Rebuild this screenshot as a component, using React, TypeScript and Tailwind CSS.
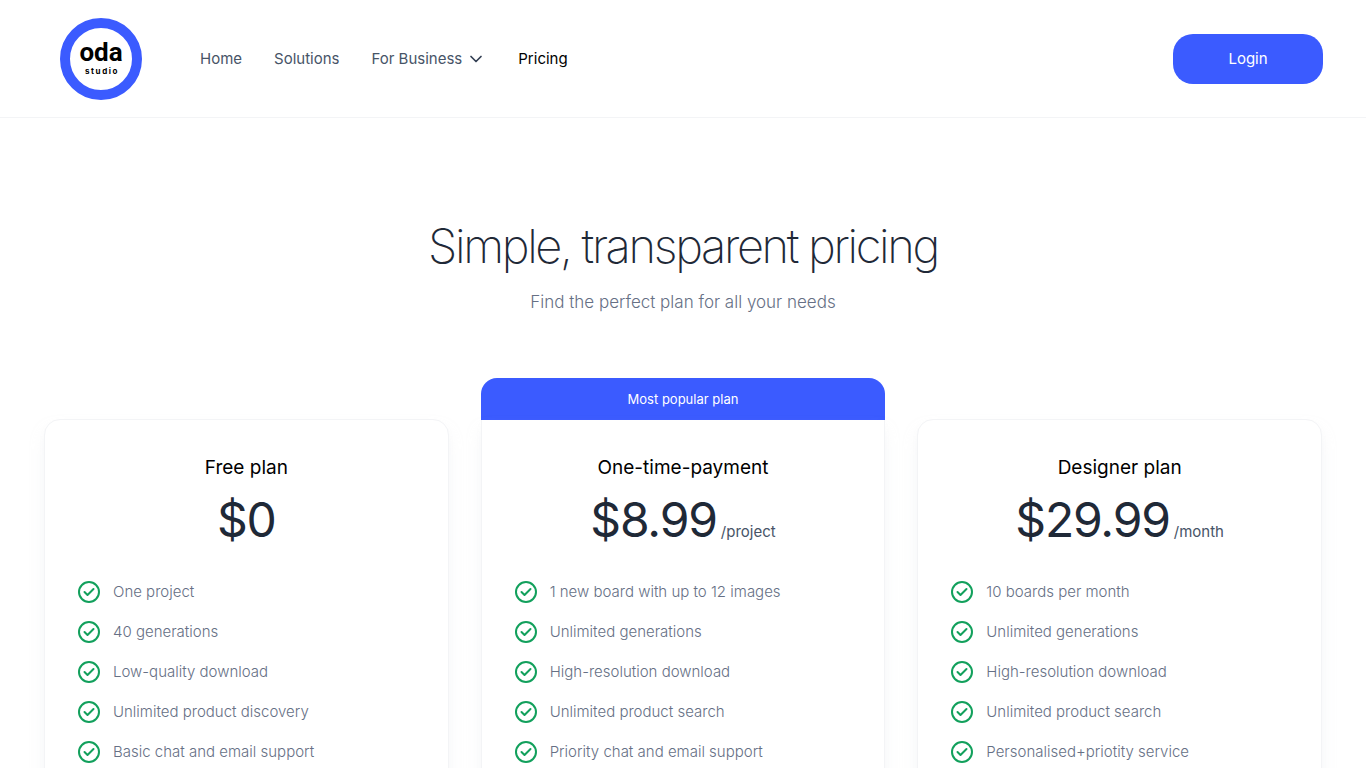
import clsx from 'clsx'

interface Plan {
  name: string
  price: string
  period?: string
  popular?: boolean
  features: string[]
}

const plans: Plan[] = [
  {
    name: 'Free plan',
    price: '$0',
    features: [
      'One project',
      '40 generations',
      'Low-quality download',
      'Unlimited product discovery',
      'Basic chat and email support',
    ],
  },
  {
    name: 'One-time-payment',
    price: '$8.99',
    period: '/project',
    popular: true,
    features: [
      '1 new board with up to 12 images',
      'Unlimited generations',
      'High-resolution download',
      'Unlimited product search',
      'Priority chat and email support',
    ],
  },
  {
    name: 'Designer plan',
    price: '$29.99',
    period: '/month',
    features: [
      '10 boards per month',
      'Unlimited generations',
      'High-resolution download',
      'Unlimited product search',
      'Personalised+priotity service',
    ],
  },
]

function Logo() {
  return (
    <a href="#" aria-label="oda studio" className="shrink-0">
      <svg width="82" height="82" viewBox="0 0 82 82">
        <circle cx="41" cy="41" r="36" fill="#fff" stroke="#3b5bff" strokeWidth="10" />
        <text x="41" y="43" textAnchor="middle" className="fill-black font-['Roboto',sans-serif] text-[26px] font-bold">
          oda
        </text>
        <text x="42" y="56" textAnchor="middle" className="fill-black font-['Inter',sans-serif] text-[8px] font-bold tracking-[0.2em]">
          studio
        </text>
      </svg>
    </a>
  )
}

function ChevronIcon() {
  return (
    <svg width="20" height="20" viewBox="0 0 20 20" fill="none" stroke="#344054" strokeWidth="1.7" strokeLinecap="round" strokeLinejoin="round">
      <path d="M5 7.5l5 5 5-5" />
    </svg>
  )
}

function CheckIcon() {
  return (
    <svg width="24" height="24" viewBox="0 0 24 24" fill="none" stroke="#12a05c" strokeWidth="2" strokeLinecap="round" strokeLinejoin="round" className="shrink-0">
      <circle cx="12" cy="12" r="10" />
      <path d="M7.5 12l3 3 6-6" />
    </svg>
  )
}

function Header() {
  return (
    <header className="flex items-center justify-between border-b border-gray-100 pt-[18px] pr-[43px] pb-[17px] pl-[60px]">
      <div className="flex items-center gap-[58px]">
        <Logo />
        <nav className="flex items-center gap-8 text-[15px] text-[#475467]">
          <a href="#">Home</a>
          <a href="#">Solutions</a>
          <button type="button" className="flex items-center gap-1">
            For Business
            <ChevronIcon />
          </button>
          <a href="#" className="text-black">Pricing</a>
        </nav>
      </div>
      <button type="button" className="h-[50px] w-[150px] rounded-[20px] bg-[#3b5bff] text-[15px] text-white">
        Login
      </button>
    </header>
  )
}

function PlanCard({ plan }: { plan: Plan }) {
  return (
    <div>
      {plan.popular && (
        <div className="flex h-[42px] items-center justify-center rounded-t-2xl bg-[#3b5bff] pt-0.5 text-[13px] text-white">
          Most popular plan
        </div>
      )}
      <div
        className={clsx(
          'border border-gray-100 bg-white px-8 pt-8 pb-10 shadow-lg shadow-gray-200/50',
          plan.popular ? 'rounded-b-2xl border-t-0' : 'rounded-2xl',
        )}
      >
        <h2 className="text-center text-[19px] leading-8 text-black">{plan.name}</h2>
        <p className="flex items-baseline justify-center gap-1 text-[#1f2937]">
          <span className="text-5xl leading-[72px] tracking-tight">{plan.price}</span>
          {plan.period && <span className="text-[15px] text-[#475467]">{plan.period}</span>}
        </p>
        <ul className="mt-6 space-y-4">
          {plan.features.map((feature) => (
            <li key={feature} className="flex items-center gap-3 text-[15px] leading-6 font-light text-[#667085]">
              <CheckIcon />
              {feature}
            </li>
          ))}
        </ul>
      </div>
    </div>
  )
}

export default function App() {
  return (
    <div className="min-h-screen bg-white font-['Inter',sans-serif]">
      <Header />
      <main className="px-11 pt-[98px] pb-24">
        <div className="text-center">
          <h1 className="text-[47px] leading-[60px] font-extralight tracking-tighter text-[#1f2937]">Simple, transparent pricing</h1>
          <p className="mt-3 text-[17px] leading-7 font-light text-[#667085]">Find the perfect plan for all your needs</p>
        </div>
        <div className="mt-[62px] grid grid-cols-3 items-end gap-8">
          {plans.map((plan) => (
            <PlanCard key={plan.name} plan={plan} />
          ))}
        </div>
      </main>
    </div>
  )
}
